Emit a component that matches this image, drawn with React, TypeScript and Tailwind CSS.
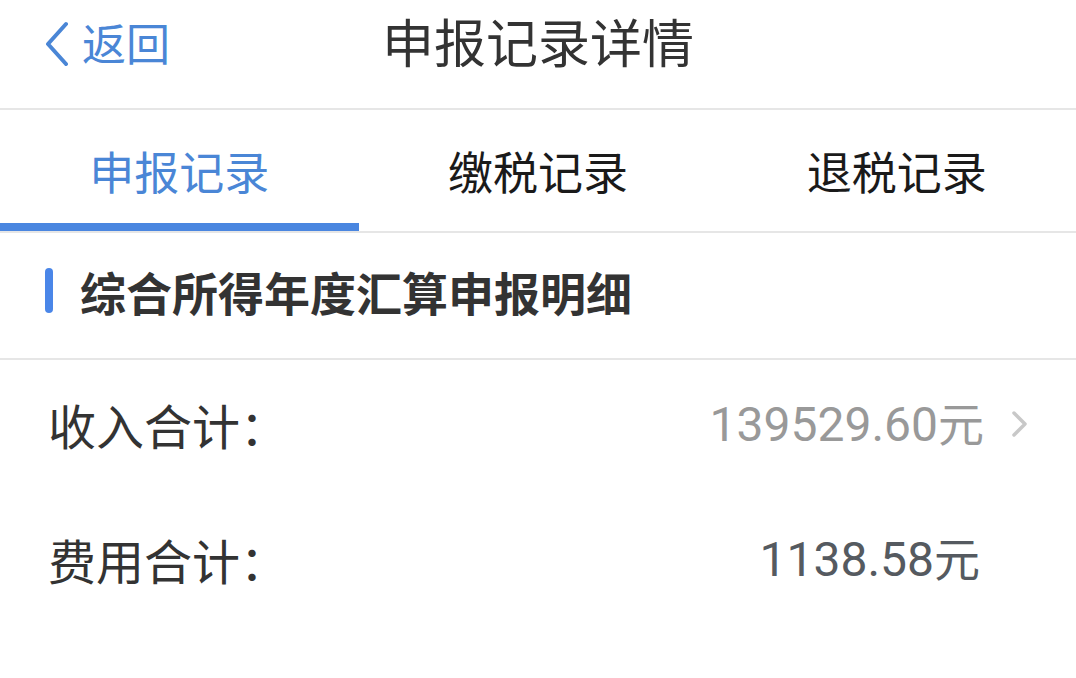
const font = { fontFamily: '"Noto Sans CJK SC", "Noto Sans", sans-serif' }
const digits = { fontFamily: 'Roboto, "Noto Sans CJK SC", sans-serif' }

function Header() {
    return (
        <header className="relative flex h-[110px] items-center justify-center border-b-2 border-[#e6e6e6]">
            <button className="absolute left-[40px] top-[18px] flex items-center text-[#4a86d6]">
                <svg width="32" height="48" viewBox="0 0 32 48" className="mr-[10px]">
                    <polyline points="26,6 8,26 26,46" fill="none" stroke="currentColor" strokeWidth="4" strokeLinecap="round" strokeLinejoin="round" />
                </svg>
                <span className="text-[44px] leading-none">返回</span>
            </button>
            <h1 className="-mt-[26px] text-[52px] font-normal leading-none text-[#333333]">申报记录详情</h1>
        </header>
    )
}

function Tabs() {
    const tabs = ['申报记录', '缴税记录', '退税记录']
    return (
        <nav className="grid h-[123px] grid-cols-3 border-b-2 border-[#e6e6e6]">
            {tabs.map((t, i) => (
                <div key={t} className="relative flex items-center justify-center">
                    <span className={`text-[45px] leading-none ${i === 0 ? 'text-[#4a86d6]' : 'text-[#1a1a1a]'}`}>{t}</span>
                    {i === 0 && <div className="absolute bottom-0 left-0 right-0 h-[8px] bg-[#4a86e0]" />}
                </div>
            ))}
        </nav>
    )
}

function Row({ label, value, muted, arrow }: { label: string; value?: string; muted?: boolean; arrow?: boolean }) {
    const num = value?.replace('元', '')
    return (
        <div className="flex h-[135px] items-center justify-between pb-[8px] pl-[48px] pr-[46px]">
            <span className="text-[48px] leading-none text-[#333333]">{label}</span>
            <div className="flex items-center">
                {value && (
                    <span className={`flex items-baseline leading-none ${muted ? 'text-[#999999]' : 'text-[#555a60]'}`}>
                        <span className="text-[48px]" style={digits}>{num}</span>
                        <span className="text-[46px]">元</span>
                    </span>
                )}
                {arrow ? (
                    <svg width="22" height="30" viewBox="0 0 22 30" className="ml-[24px]">
                        <polyline points="6,4 17,15 6,26" fill="none" stroke="#c8c8c8" strokeWidth="3.5" strokeLinecap="round" strokeLinejoin="round" />
                    </svg>
                ) : (
                    <span className="w-[50px]" />
                )}
            </div>
        </div>
    )
}

export default function App() {
    return (
        <main className="h-[678px] w-[1076px] overflow-hidden bg-white" style={font}>
            <Header />
            <Tabs />
            <section className="flex h-[127px] items-center border-b-2 border-[#e6e6e6] pb-[10px] pl-[45px]">
                <div className="h-[45px] w-[8px] rounded-full bg-[#4a86e8]" />
                <h2 className="ml-[27px] text-[46px] font-bold leading-none text-[#333333]">综合所得年度汇算申报明细</h2>
            </section>
            <Row label="收入合计：" value="139529.60元" muted arrow />
            <Row label="费用合计：" value="1138.58元" />
            <div className="pt-[6px]">
                <Row label="免税收入：" />
            </div>
        </main>
    )
}
